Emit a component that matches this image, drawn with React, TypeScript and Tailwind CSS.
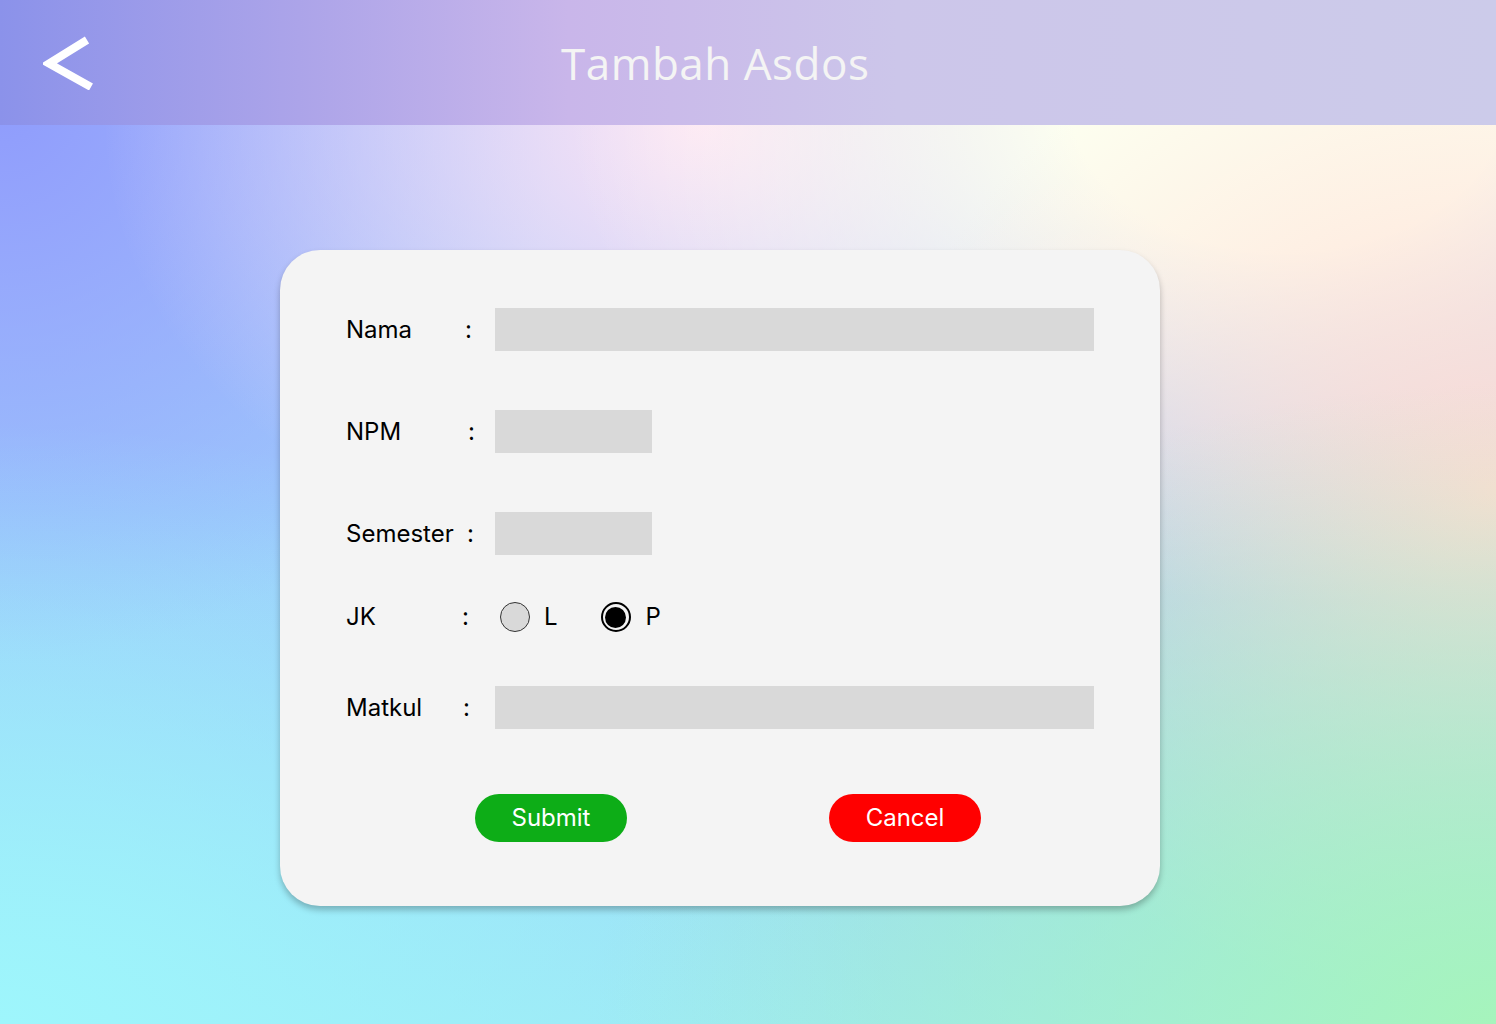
import React from "react";

function Row({ label, colonX, children, className = "" }: { label: string; colonX: string; children: React.ReactNode; className?: string }) {
  return (
    <div className={"flex items-center " + className}>
      <span className={"text-[24px] text-black leading-none " + colonX}>{label}</span>
      {children}
    </div>
  );
}

export default function App() {
  return (
    <div className="relative w-full h-[1024px] overflow-hidden font-['Inter',sans-serif] bg-[radial-gradient(ellipse_900px_640px_at_100%_100%,#a6f4bc_0%,#a6f4bc00_100%),radial-gradient(ellipse_900px_600px_at_0%_100%,#9ef6fc_0%,#9ef6fc00_100%),radial-gradient(ellipse_620px_520px_at_100%_48%,#ffdcd4_0%,#ffdcd400_100%),radial-gradient(ellipse_720px_500px_at_86%_10%,#fdfff0_0%,#fdfff0_30%,#fdfff000_100%),radial-gradient(ellipse_600px_460px_at_47%_12%,#fde4f5_0%,#fde4f500_100%),radial-gradient(ellipse_560px_560px_at_0%_10%,#8f9cfc_0%,#8f9cfc00_100%),linear-gradient(180deg,#b0c4fc_0%,#9cc8fc_50%,#9ee6f4_100%)]">
      {/* Header */}
      <div className="h-[125px] flex items-center pl-[43px] bg-[linear-gradient(90deg,#8b92ea_0%,#aca4e9_20%,#c9b6ea_38%,#ccc6ea_60%,#cccbea_100%)]">
        <svg width="52" height="54" viewBox="0 0 52 54" className="shrink-0">
          <path d="M44 4 L6 27.5 L48 51" fill="none" stroke="#ffffff" strokeWidth="8" strokeLinejoin="miter" />
        </svg>
        <h1 className="ml-[466px] text-[44px] leading-none text-[#f4f4f4] font-['Open_Sans',sans-serif] font-normal tracking-[0.5px]">
          Tambah Asdos
        </h1>
      </div>

      {/* Card */}
      <div className="ml-[280px] mt-[125px] w-[880px] h-[656px] rounded-[40px] bg-[#f4f4f4] shadow-[0_4px_6px_rgba(0,0,0,0.25)] pl-[66px] pt-[58px]">
        <Row label="Nama" colonX="w-[119px]">
          <span className="text-[24px] leading-none w-[30px]">:</span>
          <div className="w-[599px] h-[43px] bg-[#d9d9d9]" />
        </Row>
        <Row label="NPM" colonX="w-[122px]" className="mt-[59px]">
          <span className="text-[24px] leading-none w-[27px]">:</span>
          <div className="w-[157px] h-[43px] bg-[#d9d9d9]" />
        </Row>
        <Row label="Semester" colonX="w-[121px]" className="mt-[59px]">
          <span className="text-[24px] leading-none w-[28px]">:</span>
          <div className="w-[157px] h-[43px] bg-[#d9d9d9]" />
        </Row>
        <Row label="JK" colonX="w-[116px]" className="mt-[47px] h-[30px]">
          <span className="text-[24px] leading-none w-[38px]">:</span>
          <div className="w-[30px] h-[30px] rounded-full bg-[#d9d9d9] border border-[#333]" />
          <span className="ml-[14px] text-[24px] leading-none">L</span>
          <div className="ml-[43px] w-[30px] h-[30px] rounded-full border-2 border-black bg-[#f4f4f4] flex items-center justify-center">
            <div className="w-[21px] h-[21px] rounded-full bg-black" />
          </div>
          <span className="ml-[15px] text-[24px] leading-none">P</span>
        </Row>
        <Row label="Matkul" colonX="w-[117px]" className="mt-[54px]">
          <span className="text-[24px] leading-none w-[32px]">:</span>
          <div className="w-[599px] h-[43px] bg-[#d9d9d9]" />
        </Row>
        <div className="flex mt-[65px] ml-[129px]">
          <button className="w-[152px] h-[48px] rounded-full bg-[#0dad17] text-white text-[24px] leading-none">Submit</button>
          <button className="ml-[202px] w-[152px] h-[48px] rounded-full bg-[#ff0000] text-white text-[24px] leading-none">Cancel</button>
        </div>
      </div>
    </div>
  );
}
